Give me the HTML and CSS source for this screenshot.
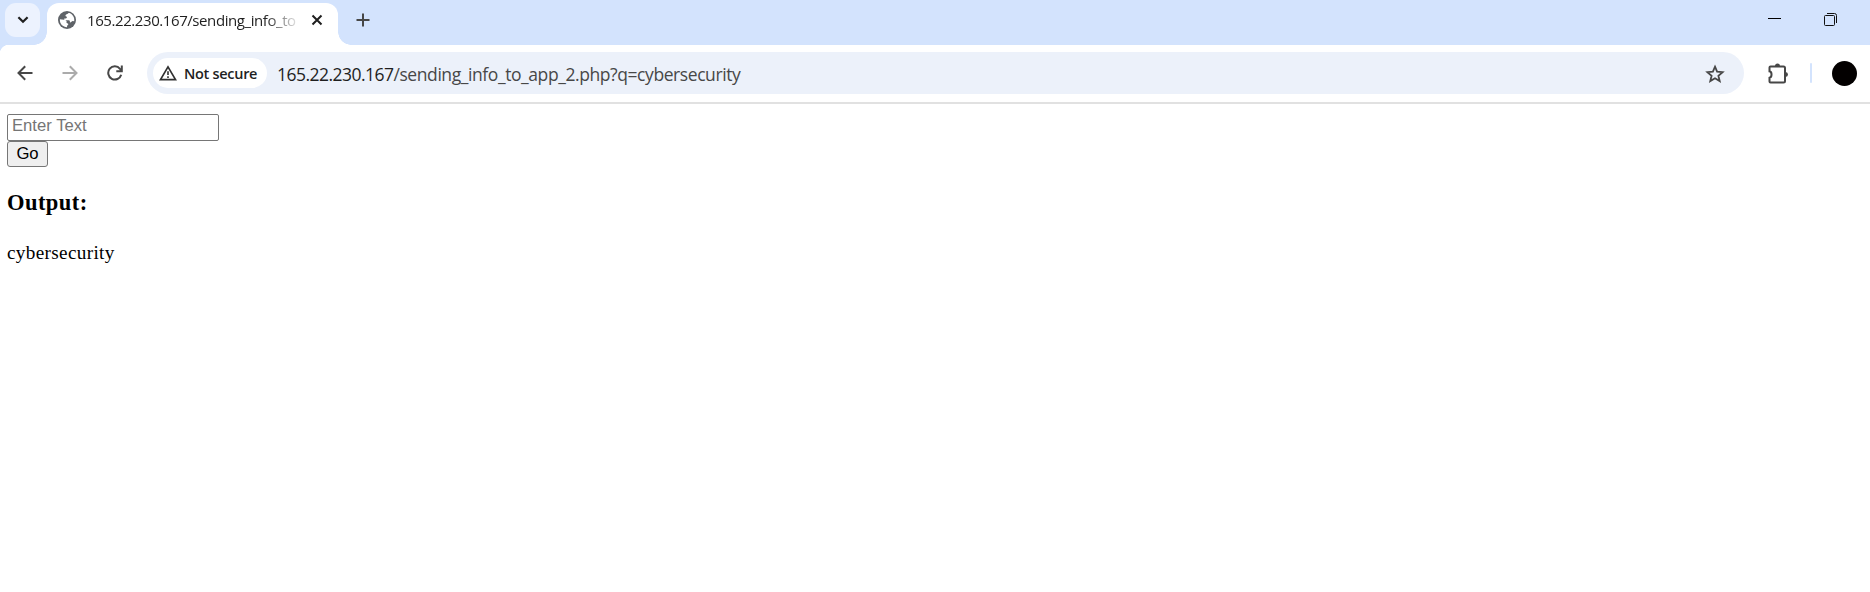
FILE: index.html
```
<!DOCTYPE html>
<html lang="en">
<head>
<meta charset="utf-8">
<title>165.22.230.167/sending_info_to_app_2.php</title>
<link rel="stylesheet" href="styles.css">
</head>
<body>
<div class="tabstrip">
  <button class="tab-search" aria-label="Search tabs"><svg width="12" height="8" viewBox="0 0 12 8"><path d="M1.4 1.3 6 5.8l4.600-4.500" fill="none" stroke="#1f1f1f" stroke-width="2.200"/></svg></button>
  <div class="tab">
    <svg class="globe" width="18" height="18" viewBox="0 0 18 18"><circle cx="9" cy="9" r="9" fill="#5f6368"/><path d="M10.500 1.900C9.800 3.200 8.300 2.700 7.600 4c-.5 1.100.5 1.800 1.300 1.700.2 1.500-1.200 2-2.600 1.900-.5 1 .2 1.800 1.300 1.700h3.300c1 .2 1.100 1.300 1 2.200 1.700.1 1.500-1.800 3.200-1.600.6.1.8.4 1.100.3.6-3.700-1.500-7.100-4.700-8.300z" fill="#fff"/><path d="M1.900 8.300c2.800.2 5.600.3 6.500 1.600.5.800-.2 1.600.3 2.100.7.6 1.700.2 1.600 1.300-.1.900-1 .8-1.200 1.600l-.1 1.300C4.900 16.200 1.500 12.900 1.900 8.300z" fill="#fff"/></svg>
    <span class="tab-title">165.22.230.167/sending_info_to</span>
    <svg class="close" width="12" height="12" viewBox="0 0 12 12"><path d="m1.500 1.500 9 9m0-9-9 9" stroke="#1f1f1f" stroke-width="2"/></svg>
  </div>
  <svg class="plus" width="14" height="14" viewBox="0 0 14 14"><path d="M7 .5v13M.5 7h13" stroke="#474747" stroke-width="2"/></svg>
  <div class="window-controls">
    <svg width="13" height="13" viewBox="0 0 13 13"><path d="M0 6.500h13" stroke="#000"/></svg>
    <svg width="13" height="13" viewBox="0 0 13 13"><rect x=".5" y="2.500" width="10" height="10" rx="1" fill="none" stroke="#111"/><path d="M3 .5h7.500q2 0 2 2V10" fill="none" stroke="#111"/></svg>
  </div>
</div>
<div class="toolbar">
  <div class="nav">
    <svg width="16" height="16" viewBox="0 0 16 16"><path d="M15.500 8H2M8.200 1.300 1.500 8l6.700 6.700" fill="none" stroke="#474747" stroke-width="2"/></svg>
    <svg width="16" height="16" viewBox="0 0 16 16"><path d="M.5 8H14M7.800 1.300 14.500 8l-6.700 6.700" fill="none" stroke="#ababab" stroke-width="2"/></svg>
    <svg width="16" height="16" viewBox="0 0 16 16"><path d="M14.200 9.700A6.600 6.600 0 1 1 13 3.800L14.500 5.500M14.800 .5v5.700H9.300" fill="none" stroke="#474747" stroke-width="2"/></svg>
  </div>
  <div class="omnibox">
    <div class="chip">
      <svg width="18" height="16" viewBox="0 0 18 16"><path d="M9 1.900 16.500 14.600h-15z" fill="none" stroke="#303030" stroke-width="1.700"/><path d="M9 6.200v3.900m0 1.100v1.800" stroke="#303030" stroke-width="1.600"/></svg>
      <span>Not secure</span>
    </div>
    <div class="url"><span class="host">165.22.230.167</span>/sending_info_to_app_2.php?q=cybersecurity</div>
    <svg class="star" width="20" height="19" viewBox="0 0 20 19"><path d="m10 2.700 2.100 5 5.500.5-4.200 3.600 1.300 5.300-4.700-2.900-4.700 2.900 1.300-5.300-4.200-3.600 5.500-.5z" fill="none" stroke="#474747" stroke-width="1.800"/></svg>
  </div>
  <svg class="puzzle" width="21" height="21" viewBox="0 0 21 21"><path d="M2.500 3.500h13q1.500 0 1.500 1.500v13q0 1.500-1.500 1.500h-13q-1 0-1-1v-3.700c2.700-.5 2.700-6 0-6.500V4.500q0-1 1-1z" fill="none" stroke="#474747" stroke-width="2"/><path d="M7 3a2.500 2.500 0 0 1 5 0zM17.500 9a2.500 2.500 0 0 1 0 5z" fill="#474747"/></svg>
  <span class="divider"></span>
  <span class="avatar"></span>
</div>
<main class="page">
  <form class="query"><input class="field" type="text" placeholder="Enter Text"><button class="go" type="button">Go</button></form>
  <h3 class="heading">Output:</h3>
  <p class="result">cybersecurity</p>
</main>
</body>
</html>
```
FILE: styles.css
```
* { box-sizing: border-box; }
body { margin: 0; height: 592px; overflow: hidden; background: #fff; font-family: "Open Sans", "Noto Sans", sans-serif; }
svg { display: block; flex: none; }
.tabstrip { display: flex; height: 45px; background: #d3e3fd; }
.tab-search { position: relative; z-index: 1; display: flex; align-items: center; justify-content: center; width: 35px; height: 34px; margin: 3px 7px 0 5px; padding: 0; border: 0; border-radius: 11px; background: #ecf2fe; }
.tab { position: relative; display: flex; align-items: center; width: 291px; height: 42px; margin-top: 3px; padding: 0 14px 8px 11px; border-radius: 12px 12px 0 0; background: #fff; }
.tab::before, .tab::after { content: ""; position: absolute; bottom: 0; width: 13px; height: 13px; }
.tab::before { right: 100%; background: radial-gradient(circle at 0 0, #d3e3fd 12.5px, #fff 13px); }
.tab::after { left: 100%; background: radial-gradient(circle at 100% 0, #d3e3fd 12.5px, #fff 13px); }
.tab-title { width: 211px; height: 24px; margin-left: 11px; white-space: nowrap; font-size: 15px; line-height: 25px; letter-spacing: -.42px; color: #1f1f1f; -webkit-mask-image: linear-gradient(90deg, #000 178px, transparent 214px); mask-image: linear-gradient(90deg, #000 178px, transparent 214px); }
.close { margin-left: 13px; }
.plus { margin: 13px 0 0 18px; }
.window-controls { display: flex; gap: 43px; margin: 13px 33px 0 auto; }
.window-controls svg:first-child { margin-top: -1px; }
.toolbar { display: flex; align-items: center; height: 59px; padding: 0 13px 1px 17px; border-bottom: 2px solid #e1e1e1; background: radial-gradient(circle at 9px 9px, #fff 9px, #d3e3fd 9.5px) 0 0 / 9px 9px no-repeat #fff; }
.nav { display: flex; gap: 29px; width: 130px; }
.omnibox { display: flex; align-items: center; width: 1597px; height: 42px; padding: 0 19px 0 6px; border-radius: 21px; background: #ecf1fa; }
.chip { display: flex; align-items: center; gap: 7px; width: 114px; height: 30px; padding-left: 6px; border-radius: 15px; background: #fff; white-space: nowrap; font-size: 14.500px; font-weight: 600; letter-spacing: -.3px; color: #1f1f1f; }
.url { margin: 2px 0 0 10px; white-space: nowrap; font-size: 17.500px; letter-spacing: -.42px; color: #474747; }
.host { letter-spacing: -.53px; color: #1f1f1f; }
.star { margin-left: auto; }
.puzzle { margin-left: 24px; }
.divider { width: 2px; height: 20px; margin-left: 21px; border-radius: 1px; background: #d3e3fd; }
.avatar { width: 25px; height: 25px; margin-left: 20px; border-radius: 50%; background: #030000; }
.page { padding: 10px 7px; font-family: "Liberation Serif", serif; color: #000; }
.query { display: flex; flex-direction: column; align-items: flex-start; }
.field, .go { font: 16.670px "Liberation Sans", sans-serif; border: 1px solid #767676; border-radius: 2px; }
.field { width: 212px; height: 27px; padding: 0 4px 3px; background: #fff; }
.field::placeholder { color: #757575; }
.go { width: 41px; height: 26px; padding: 0 0 1px; border-radius: 3px; background: #efefef; color: #000; }
.heading { margin: 23px 0 0; font-size: 22.500px; line-height: 26px; letter-spacing: .45px; }
.result { margin: 25px 0 0; font-size: 19.200px; line-height: 23px; letter-spacing: .33px; }
```
